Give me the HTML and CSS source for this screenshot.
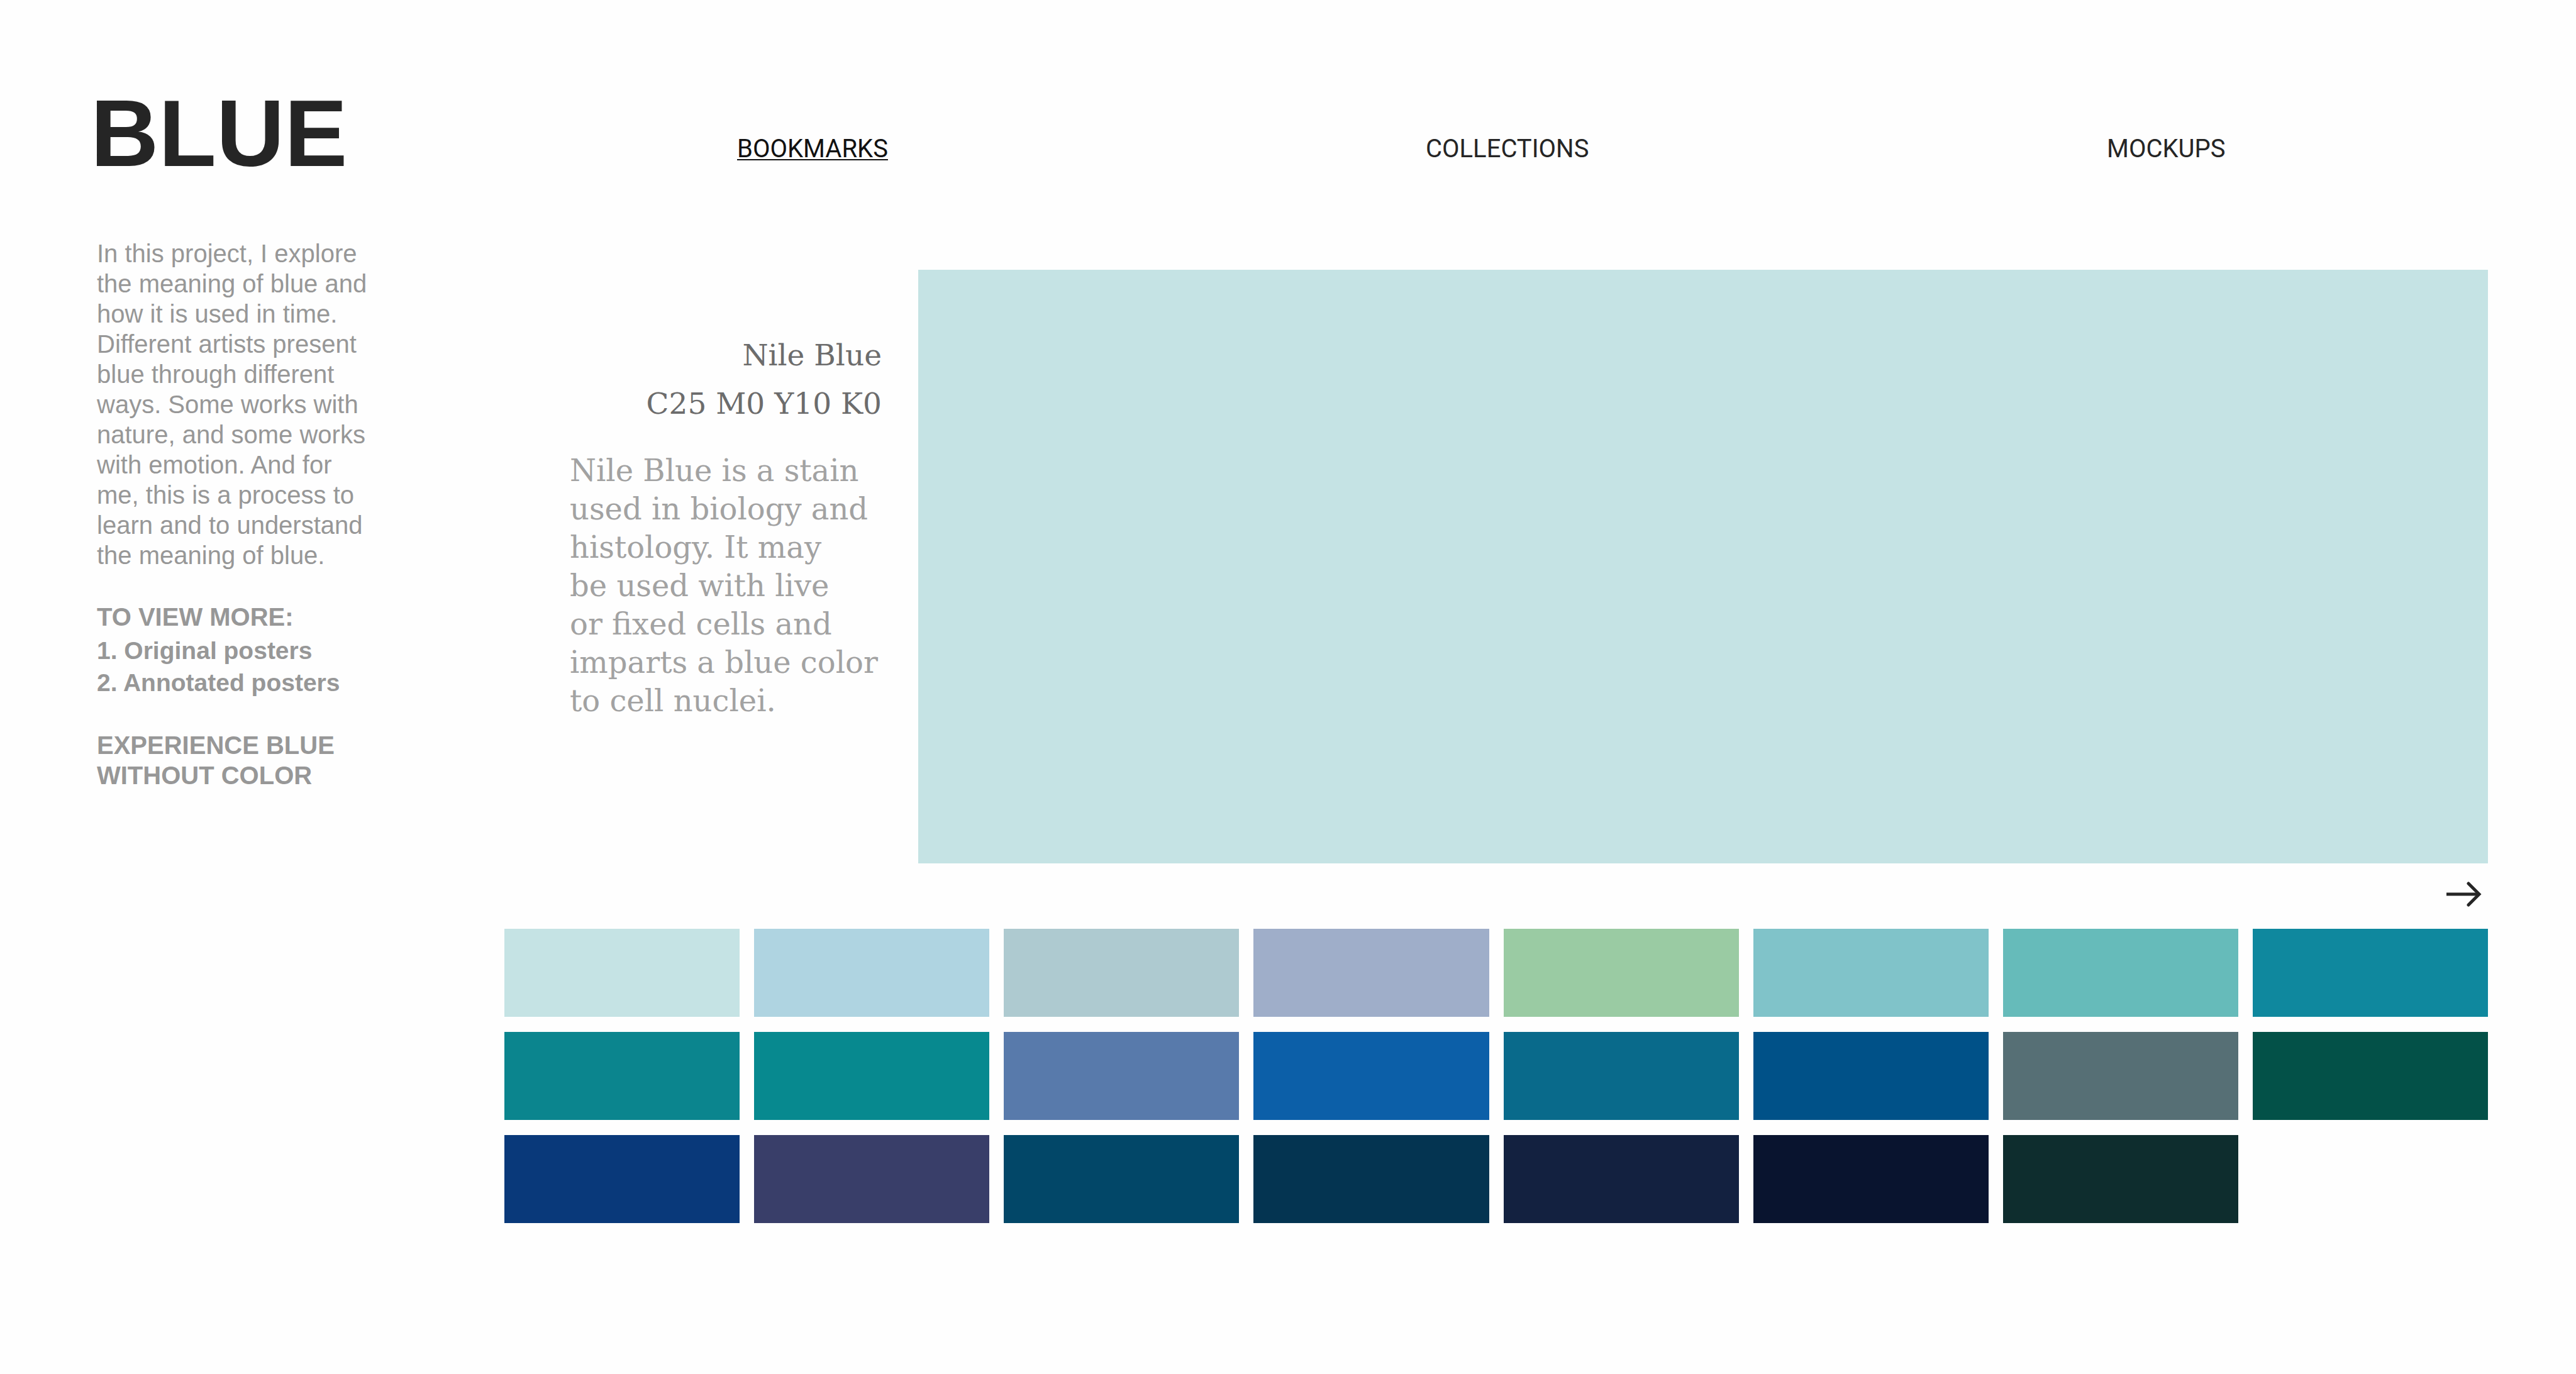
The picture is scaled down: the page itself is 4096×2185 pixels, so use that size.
FILE: index.html
```html
<!DOCTYPE html>
<html lang="en">
<head>
<meta charset="utf-8">
<title>Blue</title>
<link rel="stylesheet" href="styles.css">
</head>
<body>
<div class="page">
  <aside class="sidebar">
    <h1 class="title">BLUE</h1>
    <p class="intro">In this project, I explore<br>the meaning of blue and<br>how it is used in time.<br>Different artists present<br>blue through different<br>ways. Some works with<br>nature, and some works<br>with emotion. And for<br>me, this is a process to<br>learn and to understand<br>the meaning of blue.</p>
    <h2 class="label">TO VIEW MORE:</h2>
    <div class="links">
      <a href="#original">1. Original posters</a>
      <a href="#annotated">2. Annotated posters</a>
    </div>
    <a class="label" href="#mono">EXPERIENCE BLUE<br>WITHOUT COLOR</a>
  </aside>
  <main class="main">
    <nav class="nav">
      <a class="nav-link is-active" href="#bookmarks">BOOKMARKS</a>
      <a class="nav-link" href="#collections">COLLECTIONS</a>
      <a class="nav-link" href="#mockups">MOCKUPS</a>
    </nav>
    <section class="feature">
      <div class="info">
        <h2 class="name">Nile Blue<br>C25 M0 Y10 K0</h2>
        <p class="about">Nile Blue is a stain<br>used in biology and<br>histology. It may<br>be used with live<br>or fixed cells and<br>imparts a blue color<br>to cell nuclei.</p>
      </div>
      <div class="preview"></div>
    </section>
    <div class="pager">
      <button class="next" type="button" aria-label="Next color">
        <svg class="arrow" viewBox="0 0 56 40" fill="none" stroke="#252525" stroke-width="5"><path d="M0 20H52"/><path d="M35 3L52 20L35 37" stroke-linecap="round"/></svg>
      </button>
    </div>
    <div class="swatches">
      <button class="swatch c1" type="button" aria-label="Color 1"></button>
      <button class="swatch c2" type="button" aria-label="Color 2"></button>
      <button class="swatch c3" type="button" aria-label="Color 3"></button>
      <button class="swatch c4" type="button" aria-label="Color 4"></button>
      <button class="swatch c5" type="button" aria-label="Color 5"></button>
      <button class="swatch c6" type="button" aria-label="Color 6"></button>
      <button class="swatch c7" type="button" aria-label="Color 7"></button>
      <button class="swatch c8" type="button" aria-label="Color 8"></button>
      <button class="swatch c9" type="button" aria-label="Color 9"></button>
      <button class="swatch c10" type="button" aria-label="Color 10"></button>
      <button class="swatch c11" type="button" aria-label="Color 11"></button>
      <button class="swatch c12" type="button" aria-label="Color 12"></button>
      <button class="swatch c13" type="button" aria-label="Color 13"></button>
      <button class="swatch c14" type="button" aria-label="Color 14"></button>
      <button class="swatch c15" type="button" aria-label="Color 15"></button>
      <button class="swatch c16" type="button" aria-label="Color 16"></button>
      <button class="swatch c17" type="button" aria-label="Color 17"></button>
      <button class="swatch c18" type="button" aria-label="Color 18"></button>
      <button class="swatch c19" type="button" aria-label="Color 19"></button>
      <button class="swatch c20" type="button" aria-label="Color 20"></button>
      <button class="swatch c21" type="button" aria-label="Color 21"></button>
      <button class="swatch c22" type="button" aria-label="Color 22"></button>
      <button class="swatch c23" type="button" aria-label="Color 23"></button>
    </div>
  </main>
</div>
</body>
</html>
```
FILE: styles.css
```css
* {
  box-sizing: border-box;
}

body {
  margin: 0;
  background: #fefefe;
  color: #979797;
  font-family: "Liberation Sans", Arial, sans-serif;
}

h1, h2, p {
  margin: 0;
}

a {
  color: inherit;
  text-decoration: none;
}

button {
  padding: 0;
  border: 0;
  background: none;
}

.page {
  display: grid;
  grid-template-columns: 648px 1fr;
  padding: 128px 140px 0 154px;
}

/* Sidebar */
.sidebar {
  white-space: nowrap;
}

.title {
  margin-left: -10px;
  color: #252525;
  font-size: 150px;
  line-height: 168px;
  font-weight: 700;
}

.intro {
  margin-top: 83px;
  font-size: 40px;
  line-height: 48px;
}

.label {
  display: block;
  margin-top: 50px;
  font-size: 40px;
  line-height: 48px;
  font-weight: 700;
}

.links {
  display: flex;
  flex-direction: column;
  margin-top: 4px;
  font-size: 39px;
  line-height: 51px;
  font-weight: 700;
}

/* Main column */
.nav {
  display: grid;
  grid-template-columns: 1095fr 1083fr 606fr;
  padding: 85px 0 0 370px;
  font-family: Roboto, sans-serif;
  font-size: 40px;
  line-height: 48px;
}

.nav-link {
  justify-self: start;
  color: #252525;
}

.nav-link.is-active {
  color: #111;
  text-decoration: underline;
  text-decoration-thickness: 2px;
  text-underline-offset: 3px;
}

.feature {
  display: grid;
  grid-template-columns: 658px 1fr;
  margin-top: 168px;
}

.info {
  display: flex;
  flex-direction: column;
  padding: 97px 58px 0 104px;
  font-family: "DejaVu Serif", serif;
  font-size: 48px;
  white-space: nowrap;
}

.name {
  align-self: flex-end;
  color: #6c6c6c;
  font-size: 47px;
  line-height: 77px;
  font-weight: 400;
  text-align: right;
}

.about {
  margin-top: 38px;
  color: #a2a2a2;
  line-height: 61px;
}

.preview {
  min-height: 944px;
  background: #c5e3e4;
}

.pager {
  display: flex;
  justify-content: flex-end;
  padding: 29px 10px 35px 0;
}

.next,
.arrow {
  display: block;
  width: 56px;
  height: 40px;
}

.swatches {
  display: grid;
  grid-template-columns: repeat(8, 1fr);
  gap: 24px 23px;
}

.swatch {
  height: 140px;
}

.c1 { background: #c5e3e4; }
.c2 { background: #afd4e1; }
.c3 { background: #aecad0; }
.c4 { background: #9faec9; }
.c5 { background: #9acba3; }
.c6 { background: #80c3c9; }
.c7 { background: #66bbba; }
.c8 { background: #0f889e; }
.c9 { background: #0b858e; }
.c10 { background: #07898f; }
.c11 { background: #587aab; }
.c12 { background: #0c5fa8; }
.c13 { background: #096a8b; }
.c14 { background: #005188; }
.c15 { background: #566f75; }
.c16 { background: #035148; }
.c17 { background: #09397a; }
.c18 { background: #393e69; }
.c19 { background: #024768; }
.c20 { background: #043451; }
.c21 { background: #132140; }
.c22 { background: #09142f; }
.c23 { background: #0e2d2e; }
```
